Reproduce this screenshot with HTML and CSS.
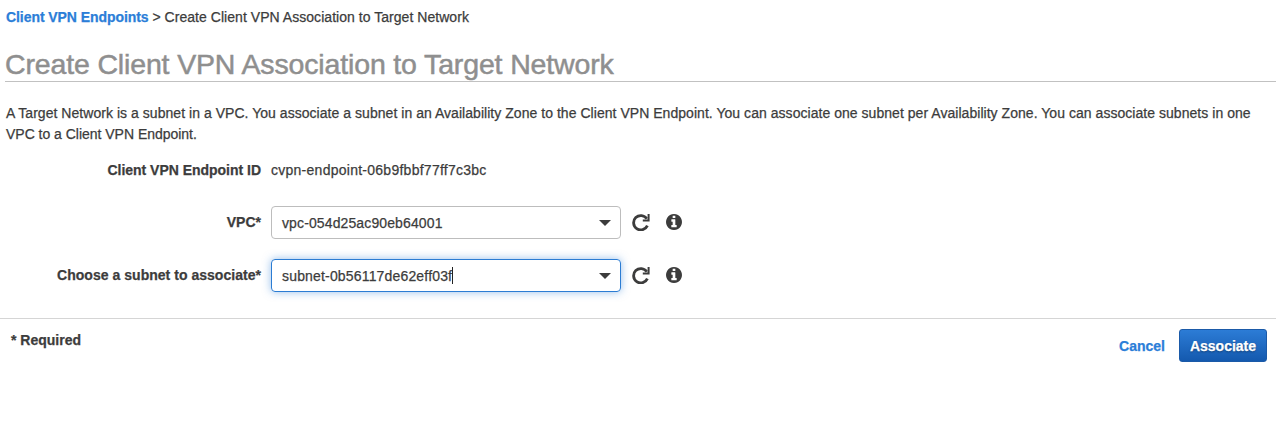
FILE: index.html
```html
<!DOCTYPE html>
<html lang="en">
<head>
<meta charset="utf-8">
<title>Create Client VPN Association to Target Network</title>
<link rel="stylesheet" href="styles.css">
</head>
<body>
<svg class="sprite" aria-hidden="true">
  <symbol id="reload" viewBox="0 0 18 18">
    <path d="M14.800 5.700A7.200 7.200 0 1 0 15.400 12.700" fill="none" stroke="currentColor" stroke-width="2.800"/>
    <path d="M16.600 1V7.500H10.800" fill="none" stroke="currentColor" stroke-width="2"/>
  </symbol>
  <symbol id="info" viewBox="128 128 1536 1536">
    <path fill="currentColor" d="M1152 1376v-160q0-14-9-23t-23-9h-96v-512q0-14-9-23t-23-9h-320q-14 0-23 9t-9 23v160q0 14 9 23t23 9h96v320h-96q-14 0-23 9t-9 23v160q0 14 9 23t23 9h448q14 0 23-9t9-23zm-128-896v-160q0-14-9-23t-23-9h-192q-14 0-23 9t-9 23v160q0 14 9 23t23 9h192q14 0 23-9t9-23zm640 416q0 209-103 385.500t-279.500 279.500-385.500 103-385.500-103-279.500-279.500-103-385.500 103-385.500 279.500-279.500 385.500-103 385.500 103 279.500 279.500 103 385.500z"/>
  </symbol>
</svg>
<nav class="crumbs"><a class="link" href="#">Client VPN Endpoints</a><span class="sep">&gt;</span><span class="current">Create Client VPN Association to Target Network</span></nav>
<h1 class="title">Create Client VPN Association to Target Network</h1>
<p class="intro">A Target Network is a subnet in a VPC. You associate a subnet in an Availability Zone to the Client VPN Endpoint. You can associate one subnet per Availability Zone. You can associate subnets in one<br><span class="tail">VPC to a Client VPN Endpoint.</span></p>
<main class="form">
  <div class="row row-static"><span class="label">Client VPN Endpoint ID</span><span class="value">cvpn-endpoint-06b9fbbf77ff7c3bc</span></div>
  <div class="row"><span class="label">VPC*</span>
    <div class="select"><span class="vpc">vpc-054d25ac90eb64001</span><i class="caret"></i></div>
    <svg class="reload"><use href="#reload"/></svg><svg class="info"><use href="#info"/></svg>
  </div>
  <div class="row"><span class="label">Choose a subnet to associate*</span>
    <div class="select focused"><span class="subnet">subnet-0b56117de62eff03f</span><i class="cursor"></i><i class="caret"></i></div>
    <svg class="reload"><use href="#reload"/></svg><svg class="info"><use href="#info"/></svg>
  </div>
</main>
<footer class="footer">
  <span class="required">* Required</span>
  <a class="link cancel" href="#">Cancel</a>
  <button class="primary">Associate</button>
</footer>
</body>
</html>
```
FILE: styles.css
```css
* { box-sizing: border-box; }
body {
  margin: 0;
  background: #fff;
  color: #3c3c3c;
  font: 14px/20px "Liberation Sans", Arial, sans-serif;
  -webkit-text-stroke: .25px currentColor;
  white-space: nowrap;
}
.sprite { display: none; }
.link { color: #2b7ed8; font-weight: bold; text-decoration: none; }
.crumbs { display: flex; padding: 7px 0 0 6px; height: 27px; letter-spacing: -.07px; }
.sep { margin: 0 4px; }
.current { letter-spacing: .04px; }
.title {
  margin: 19px 4px 0 5px;
  height: 36px;
  border-bottom: 1px solid #c1c1c1;
  color: #8f8f8f;
  font-size: 28.5px;
  font-weight: normal;
  line-height: 36px;
  letter-spacing: -.15px;
  -webkit-text-stroke-width: .5px;
}
.intro { margin: 21px 0 0 6px; line-height: 21px; letter-spacing: .04px; }
.tail { letter-spacing: -.02px; }
.form { padding-top: 15px; }
.row { display: flex; height: 33px; margin-bottom: 20px; }
.row-static { height: 20px; margin-bottom: 26px; }
.label { width: 261px; margin-right: 10px; text-align: right; font-weight: bold; padding-top: 6px; letter-spacing: .03px; }
.row-static .label { padding-top: 0; letter-spacing: -.02px; }
.value { letter-spacing: .26px; }
.vpc { letter-spacing: .12px; }
.subnet { letter-spacing: .17px; }
.select {
  display: flex;
  align-items: center;
  width: 350px;
  height: 33px;
  padding: 0 9px 0 10px;
  border: 1px solid #bdbdbd;
  border-radius: 4px;
}
.focused { border-color: #2b7cd3; box-shadow: 0 0 8px rgba(43, 126, 216, .5); }
.caret { margin: 1px 0 0 auto; border: 6px solid transparent; border-top-color: #3c3c3c; border-bottom: 0; }
.cursor { width: 1px; height: 17px; background: #222; }
.reload { width: 18px; height: 18px; margin: 7px 0 0 11px; }
.info { width: 16px; height: 16px; margin: 8px 0 0 16px; }
.footer {
  display: flex;
  align-items: flex-start;
  width: 1276px;
  height: 53px;
  margin-top: 26px;
  padding: 10px 9px 0 11px;
  border-top: 1px solid #d5d5d5;
}
.required { margin-right: auto; padding-top: 1px; font-weight: bold; }
.cancel { margin: 7px 14px 0 0; }
.primary {
  width: 88px;
  height: 33px;
  padding: 1px 0 0;
  border: 1px solid #1b5aa8;
  border-radius: 3px;
  background: linear-gradient(#2c7cd6, #1459ae);
  color: #fff;
  font: bold 14px/20px "Liberation Sans", Arial, sans-serif;
  text-shadow: 0 1px 2px rgba(0, 0, 0, .4);
}
```
